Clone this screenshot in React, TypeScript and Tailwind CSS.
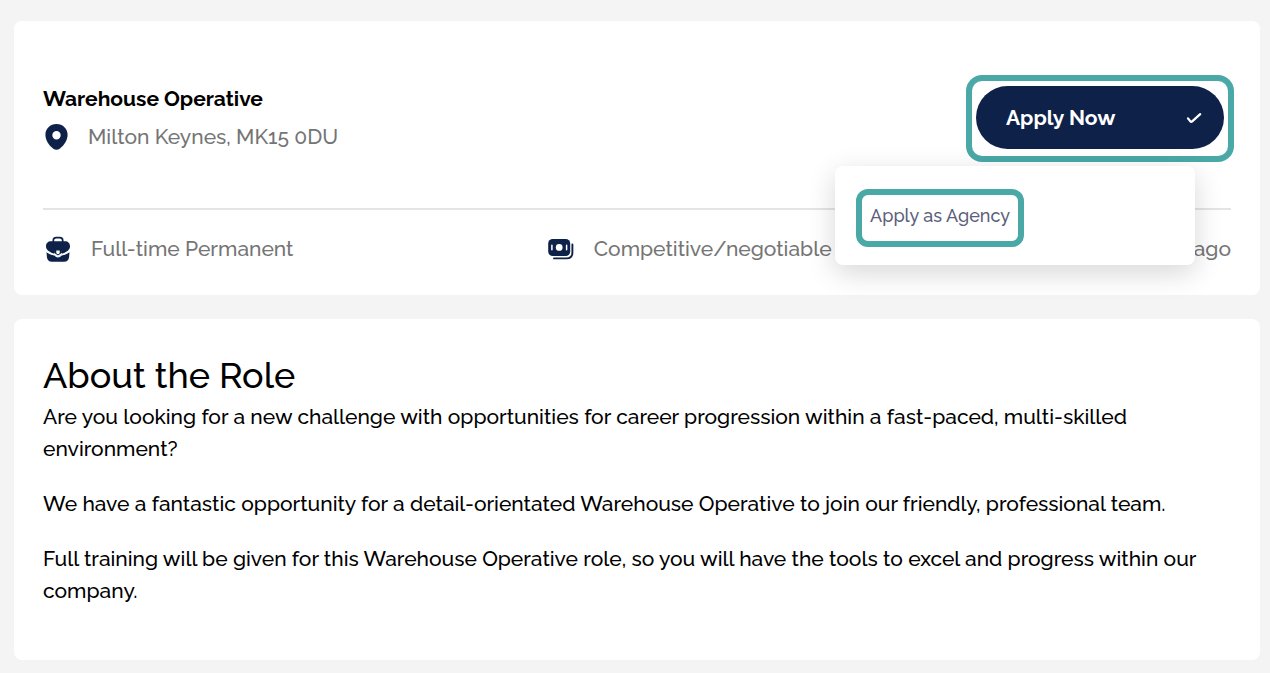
import React from "react";

function PinIcon() {
  return (
    <svg viewBox="0 0 24 28" className="h-7 w-6 shrink-0" fill="#0e2148" fillRule="evenodd" aria-hidden="true">
      <path d="M12.500 1C6.100 1 1.400 5.800 1.400 11.800c0 5.400 3.500 10.700 7.900 13.900 2 1.500 4.400 1.500 6.400 0 4.400-3.200 7.900-8.500 7.900-13.900C23.600 5.800 18.900 1 12.500 1Zm0 7a4.200 4.200 0 1 1 0 8.400A4.200 4.200 0 0 1 12.500 8Z" />
    </svg>
  );
}

function BriefcaseIcon() {
  return (
    <svg viewBox="0 0 26 26" className="size-[26px] shrink-0" aria-hidden="true">
      <path d="M8.300 6V4.500c0-1.900 1-2.900 2.900-2.900h3.600c1.900 0 2.900 1 2.900 2.900V6" fill="none" stroke="#0e2148" strokeWidth="1.700" />
      <path d="M6 5.300h14c3 0 5 2 5 5 0 2-.8 3.500-2.200 4.400-2.100 1.400-4.300 2.600-6.600 3.300V15.500c0-1.300-1-2-3.200-2s-3.200.7-3.200 2V18c-2.300-.7-4.500-1.900-6.600-3.300C1.800 13.800 1 12.300 1 10.300c0-3 2-5 5-5Z" fill="#0e2148" />
      <path d="M1.500 16.200c2.600 1.600 5.300 2.900 8.300 3.600.7 1.100 1.800 1.700 3.200 1.700s2.500-.6 3.200-1.700c3-.7 5.700-2 8.300-3.600l-.4 4.800c-.3 3.200-1.900 4.700-5.100 4.700H7c-3.200 0-4.800-1.500-5.100-4.700Z" fill="#0e2148" />
      <path d="M9.400 12.500h7.200v6l-3.600 2-3.600-2Z" fill="#0e2148" />
      <path d="M11.300 14.600h3.400v1.900a1.700 1.700 0 0 1-3.400 0Z" fill="#fff" />
      <path d="M9 17.600 13 20.200 17 17.600" fill="none" stroke="#fff" strokeWidth="1.300" />
    </svg>
  );
}

function MoneyIcon() {
  return (
    <svg viewBox="0 0 26 22" className="h-[22px] w-[26px] shrink-0" aria-hidden="true">
      <rect x=".2" y="1" width="22" height="17" rx="4.500" fill="#0e2148" />
      <circle cx="11.200" cy="9.400" r="3.400" fill="#fff" />
      <path d="M3.900 7.200v4.600M18.600 7.200v4.600" stroke="#fff" strokeWidth="1.500" strokeLinecap="round" />
      <path d="M24.400 6.500v8c0 3.900-2 5.900-5.700 5.900H6" fill="none" stroke="#0e2148" strokeWidth="1.900" strokeLinecap="round" />
    </svg>
  );
}

function ClockIcon() {
  return (
    <svg viewBox="0 0 26 26" className="size-5 shrink-0" aria-hidden="true">
      <circle cx="13" cy="13" r="12" fill="#0e2148" />
      <path d="M13 7v6l4 3" fill="none" stroke="#fff" strokeWidth="2" strokeLinecap="round" />
    </svg>
  );
}

function CheckIcon() {
  return (
    <svg viewBox="0 0 16 12" className="h-3 w-4" fill="none" stroke="#fff" strokeWidth="2.300" strokeLinecap="round" strokeLinejoin="round" aria-hidden="true">
      <path d="M2 6.400 4.400 9.400Q5.200 10.200 6.200 9.400L14.200 2.200" />
    </svg>
  );
}

function Detail({ icon, children }: { icon: React.ReactNode; children: React.ReactNode }) {
  return (
    <li className="flex items-center gap-5 whitespace-nowrap">
      {icon}
      <span>{children}</span>
    </li>
  );
}

export default function App() {
  return (
    <main className="flex min-h-screen flex-col gap-6 bg-[#f4f4f4] pt-[21px] pr-2.5 pb-3 pl-3.5 font-['Raleway','Lato',sans-serif] text-[21px] font-medium text-black [font-feature-settings:'ss09']">
      <section className="rounded-lg bg-white px-[29px] pt-[54px] pb-[30px]">
        <div className="flex items-start justify-between">
          <div className="pt-2">
            <h1 className="leading-8 font-bold">Warehouse Operative</h1>
            <p className="mt-1.5 flex items-center gap-5 pl-px leading-8 text-[#757575]">
              <PinIcon />
              Milton Keynes, MK15 0DU
            </p>
          </div>
          <div className="relative -mr-[3px] rounded-2xl border-6 border-[#4aa8a6] px-1 pt-[5px] pb-[7px]">
            <button
              type="button"
              aria-expanded="true"
              className="flex h-[63px] w-[248px] items-center justify-between rounded-full bg-[#0e2148] pr-[22px] pl-[30px] font-bold text-white"
            >
              Apply Now
              <CheckIcon />
            </button>
            <div className="absolute top-[85px] right-[33px] w-[360px] rounded-lg bg-white px-[21px] pt-[23px] pb-[18px] shadow-[0_8px_28px_rgba(0,0,0,0.16)]">
              <a
                href="#agency"
                className="block h-[58px] w-[168px] rounded-xl border-6 border-[#4aa8a6] pt-[9px] pl-2 text-lg leading-6 whitespace-nowrap text-[#5c5f7d]"
              >
                Apply as Agency
              </a>
            </div>
          </div>
        </div>
        <ul className="mt-[46px] flex items-center justify-between border-t-2 border-[#e4e4e4] pt-[23px] pl-0.5 leading-8 text-[#757575]">
          <Detail icon={<BriefcaseIcon />}>Full-time Permanent</Detail>
          <Detail icon={<MoneyIcon />}>Competitive/negotiable</Detail>
          <Detail icon={<ClockIcon />}>3 days ago</Detail>
        </ul>
      </section>

      <section className="rounded-lg bg-white px-[29px] pt-9 pb-[53px] leading-8">
        <h2 className="mb-1.5 text-4xl leading-10 font-medium">About the Role</h2>
        <div className="flex flex-col gap-[23px]">
          <p>
            Are you looking for a new challenge with opportunities for career progression within a fast-paced, multi-skilled environment?
          </p>
          <p>
            We have a fantastic opportunity for a detail-orientated Warehouse Operative to join our friendly, professional team.
          </p>
          <p>
            Full training will be given for this Warehouse Operative role, so you will have the tools to excel and progress within our company.
          </p>
        </div>
      </section>
    </main>
  );
}
